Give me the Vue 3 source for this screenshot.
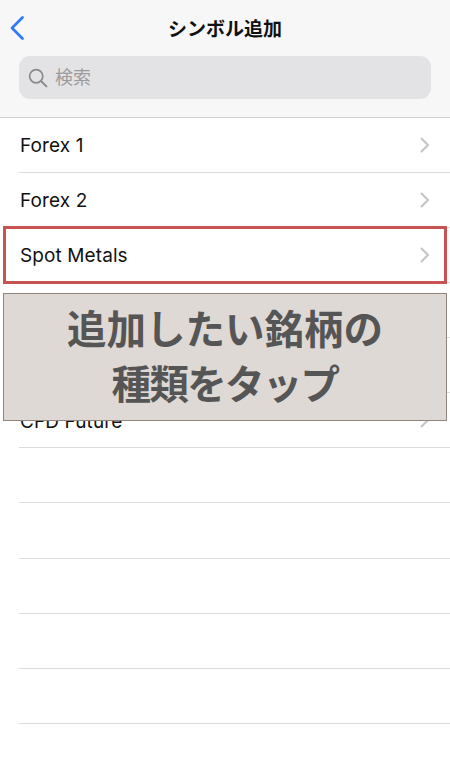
<script setup>
const rows = ['Forex 1', 'Forex 2', 'Spot Metals', '', '', 'CFD Future', '', '', '', '', '']
const chevronCount = 6
</script>

<template>
  <div class="screen">
    <header class="head">
      <div class="nav">
        <svg class="back" width="16" height="26" viewBox="0 0 16 26" fill="none">
          <path d="M13.5 2.5 L3 13 L13.5 23.5" stroke="#2f7bf6" stroke-width="2.8" stroke-linecap="round" stroke-linejoin="round" />
        </svg>
        <div class="title">シンボル追加</div>
      </div>
      <div class="search">
        <svg width="20" height="20" viewBox="0 0 20 20" fill="none">
          <circle cx="8.2" cy="8.2" r="6.6" stroke="#8a8a8e" stroke-width="1.7" />
          <path d="M13 13 L18.4 18.4" stroke="#8a8a8e" stroke-width="2" stroke-linecap="round" />
        </svg>
        <span class="hint">検索</span>
      </div>
    </header>
    <ul class="list">
      <li v-for="(r, i) in rows" :key="i" class="row">
        <span class="label">{{ r }}</span>
        <svg v-if="i < chevronCount" class="chev" width="10" height="16" viewBox="0 0 10 16" fill="none">
          <path d="M1.5 1.5 L8 8 L1.5 14.5" stroke="#c4c4c7" stroke-width="2" stroke-linecap="round" stroke-linejoin="round" />
        </svg>
      </li>
    </ul>
    <div class="mark"></div>
    <div class="banner">
      <span class="line one">追加したい銘柄の</span>
      <span class="line two">種類をタップ</span>
    </div>
  </div>
</template>

<style scoped>
.screen {
  position: relative;
  width: 450px;
  height: 778px;
  overflow: hidden;
  background: #fff;
  font-family: Inter, "Noto Sans CJK JP", sans-serif;
  color: #111;
}
.head {
  height: 116.5px;
  background: #f7f7f8;
  border-bottom: 1px solid #cfcfd1;
  display: flex;
  flex-direction: column;
}
.nav {
  height: 56px;
  display: flex;
  align-items: center;
  justify-content: center;
  position: relative;
}
.back {
  position: absolute;
  left: 9px;
  top: 15px;
}
.title {
  font-family: "Noto Sans CJK JP", sans-serif;
  font-weight: 700;
  font-size: 19px;
  color: #111;
  padding-bottom: 2px;
}
.search {
  margin: 0 19px;
  height: 43px;
  border-radius: 11px;
  background: #e3e3e5;
  display: flex;
  align-items: center;
  gap: 7px;
  padding-left: 9px;
  font-family: "Noto Sans CJK JP", sans-serif;
  font-size: 18px;
  color: #9b9b9e;
}
.hint {
  padding-bottom: 3px;
}
.list {
  list-style: none;
  margin: 0;
  padding: 0 0 0 19px;
}
.row {
  height: 55.15px;
  box-sizing: border-box;
  border-bottom: 1px solid #dcdcde;
  display: flex;
  align-items: center;
  justify-content: space-between;
  padding-right: 20px;
  font-size: 19px;
}
.label {
  padding: 2px 0 0 1px;
  letter-spacing: 0.1px;
}
.mark {
  position: absolute;
  left: 3px;
  top: 226px;
  width: 444px;
  height: 58px;
  box-sizing: border-box;
  border: 3px solid #c85353;
}
.banner {
  position: absolute;
  left: 3px;
  top: 293px;
  width: 444px;
  height: 128px;
  box-sizing: border-box;
  border: 1px solid #8f857c;
  background: #ded9d4;
  color: #555;
  font-family: "Noto Sans CJK JP", sans-serif;
  font-weight: 700;
  font-size: 39.5px;
  line-height: 55px;
  text-align: center;
  padding-top: 5px;
}
.line {
  display: block;
}
.two {
  letter-spacing: -1.7px;
}
</style>
